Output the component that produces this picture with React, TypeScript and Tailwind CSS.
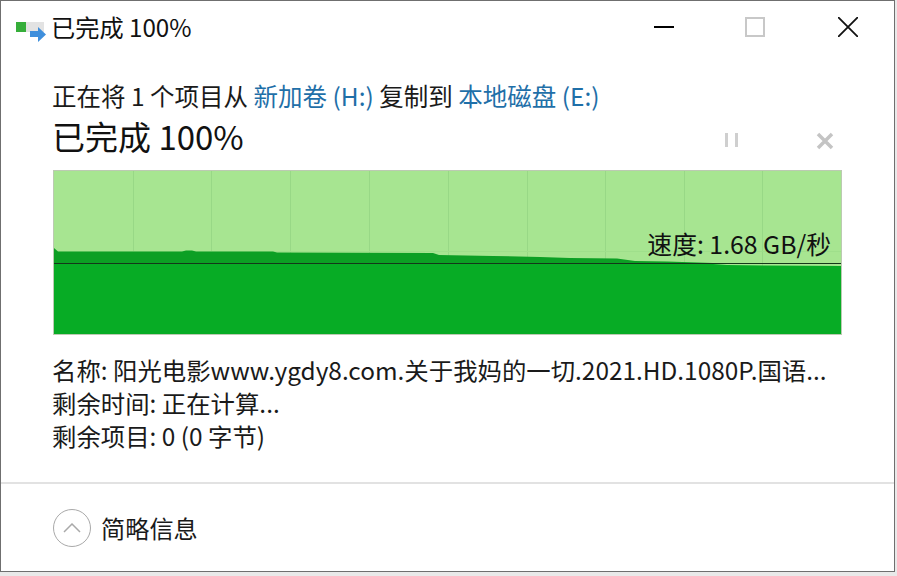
const font = { fontFamily: '"Noto Sans CJK SC", "Noto Sans", sans-serif' };

const gridLines = [79.5, 157.5, 236.5, 315.5, 394.5, 473.5, 551.5, 630.5, 708.5];

function CopyIcon() {
  return (
    <svg width="32" height="30" viewBox="0 0 32 30" className="shrink-0">
      <rect x="10" y="10" width="18" height="10" fill="#e3e3e3" />
      <rect x="0" y="10" width="10" height="10" fill="#36ae3a" />
      <path d="M14 19h8v-4l8 7.5L22 30v-5h-8z" fill="#3f8fdc" />
    </svg>
  );
}

function SpeedChart() {
  return (
    <div className="relative h-[165px] border border-[#bccab2] bg-[#a7e591]">
      <svg width="787" height="163" viewBox="0 0 787 163" className="block">
        {gridLines.map((x) => (
          <line key={x} x1={x} y1="0" x2={x} y2="163" stroke="#98d886" />
        ))}
        <line x1="0" y1="80.5" x2="787" y2="80.5" stroke="#9fdf8b" />
        <path
          d="M0 77L4 80.5L128 80.5L132 79.5L138 79.5L142 80.5L219 80.5L223 81.5L379 82L385 84L439 85L486 86L516 87L563 87.5L581 90L613 90.5L659 92L659 93L0 93Z"
          fill="#0c9f24"
        />
        <path d="M0 93L659 93L673 94L711 94.5L787 95L787 163L0 163Z" fill="#07ac25" />
        <line x1="0" y1="92.5" x2="787" y2="92.5" stroke="#14361a" />
      </svg>
      <span className="absolute right-[10px] top-[56px] text-[24.8px] leading-[32px] text-[#111]">
        速度: 1.68 GB/秒
      </span>
    </div>
  );
}

export default function App() {
  return (
    <div className="h-[576px] w-[897px] overflow-hidden bg-[#e9e9e9]" style={font}>
      <div className="flex h-[572px] w-[895px] flex-col border border-[#6f6f6f] bg-white">
        {/* Title bar */}
        <div className="flex h-[52px] shrink-0 items-center pl-[15px] pr-[36px]">
          <CopyIcon />
          <span className="ml-[3px] text-[24.2px] leading-[30px] text-[#111]">已完成 100%</span>
          <div className="ml-auto flex items-center">
            <svg width="20" height="20" viewBox="0 0 20 20">
              <line x1="0" y1="10" x2="20" y2="10" stroke="#000" strokeWidth="2" />
            </svg>
            <svg width="20" height="20" viewBox="0 0 20 20" className="ml-[71px]">
              <rect x="1" y="1" width="18" height="18" fill="none" stroke="#c8c8c8" strokeWidth="2" />
            </svg>
            <svg width="20" height="20" viewBox="0 0 20 20" className="ml-[73px]">
              <path d="M0 0L20 20M20 0L0 20" stroke="#111" strokeWidth="1.8" />
            </svg>
          </div>
        </div>

        {/* Body */}
        <div className="flex flex-1 flex-col pl-[51px] pr-[52px]">
          <div className="mt-[27px] text-[24.5px] leading-[32px] text-[#1a1a1a]">
            正在将 1 个项目从 <span className="text-[#1f6fa8]">新加卷 (H:)</span> 复制到{' '}
            <span className="text-[#1f6fa8]">本地磁盘 (E:)</span>
          </div>
          <div className="mt-[4px] flex h-[40px] items-center">
            <span className="text-[33px] leading-[40px] text-[#111]">已完成 100%</span>
            <svg width="16" height="16" viewBox="0 0 16 16" className="ml-auto mr-[76px] mt-[7px]">
              <rect x="1" y="1" width="3" height="14" fill="#cfcfcf" />
              <rect x="11" y="1" width="3" height="14" fill="#cfcfcf" />
            </svg>
            <svg width="18" height="18" viewBox="0 0 18 18" className="mr-[8px] mt-[9px]">
              <path d="M2 2L16 16M16 2L2 16" stroke="#c4c4c4" strokeWidth="3.5" />
            </svg>
          </div>
          <div className="ml-[1px] mt-[14px]">
            <SpeedChart />
          </div>
          <div className="mt-[19px] flex flex-col gap-[1px] text-[24.4px] leading-[32px] text-[#1a1a1a]">
            <div className="whitespace-nowrap">名称: 阳光电影www.ygdy8.com.关于我妈的一切.2021.HD.1080P.国语...</div>
            <div>剩余时间: 正在计算...</div>
            <div>剩余项目: 0 (0 字节)</div>
          </div>
        </div>

        {/* Footer */}
        <div className="flex h-[89px] shrink-0 items-center gap-[10px] border-t-2 border-[#e2e2e2] pl-[52px]">
          <span className="flex size-[38px] items-center justify-center rounded-full border border-[#a9a9a9]">
            <svg width="18" height="10" viewBox="0 0 18 10">
              <path d="M1 9L9 1L17 9" fill="none" stroke="#a9a9a9" strokeWidth="1.5" />
            </svg>
          </span>
          <span className="text-[24.2px] leading-[32px] text-[#1a1a1a]">简略信息</span>
        </div>
      </div>
    </div>
  );
}
